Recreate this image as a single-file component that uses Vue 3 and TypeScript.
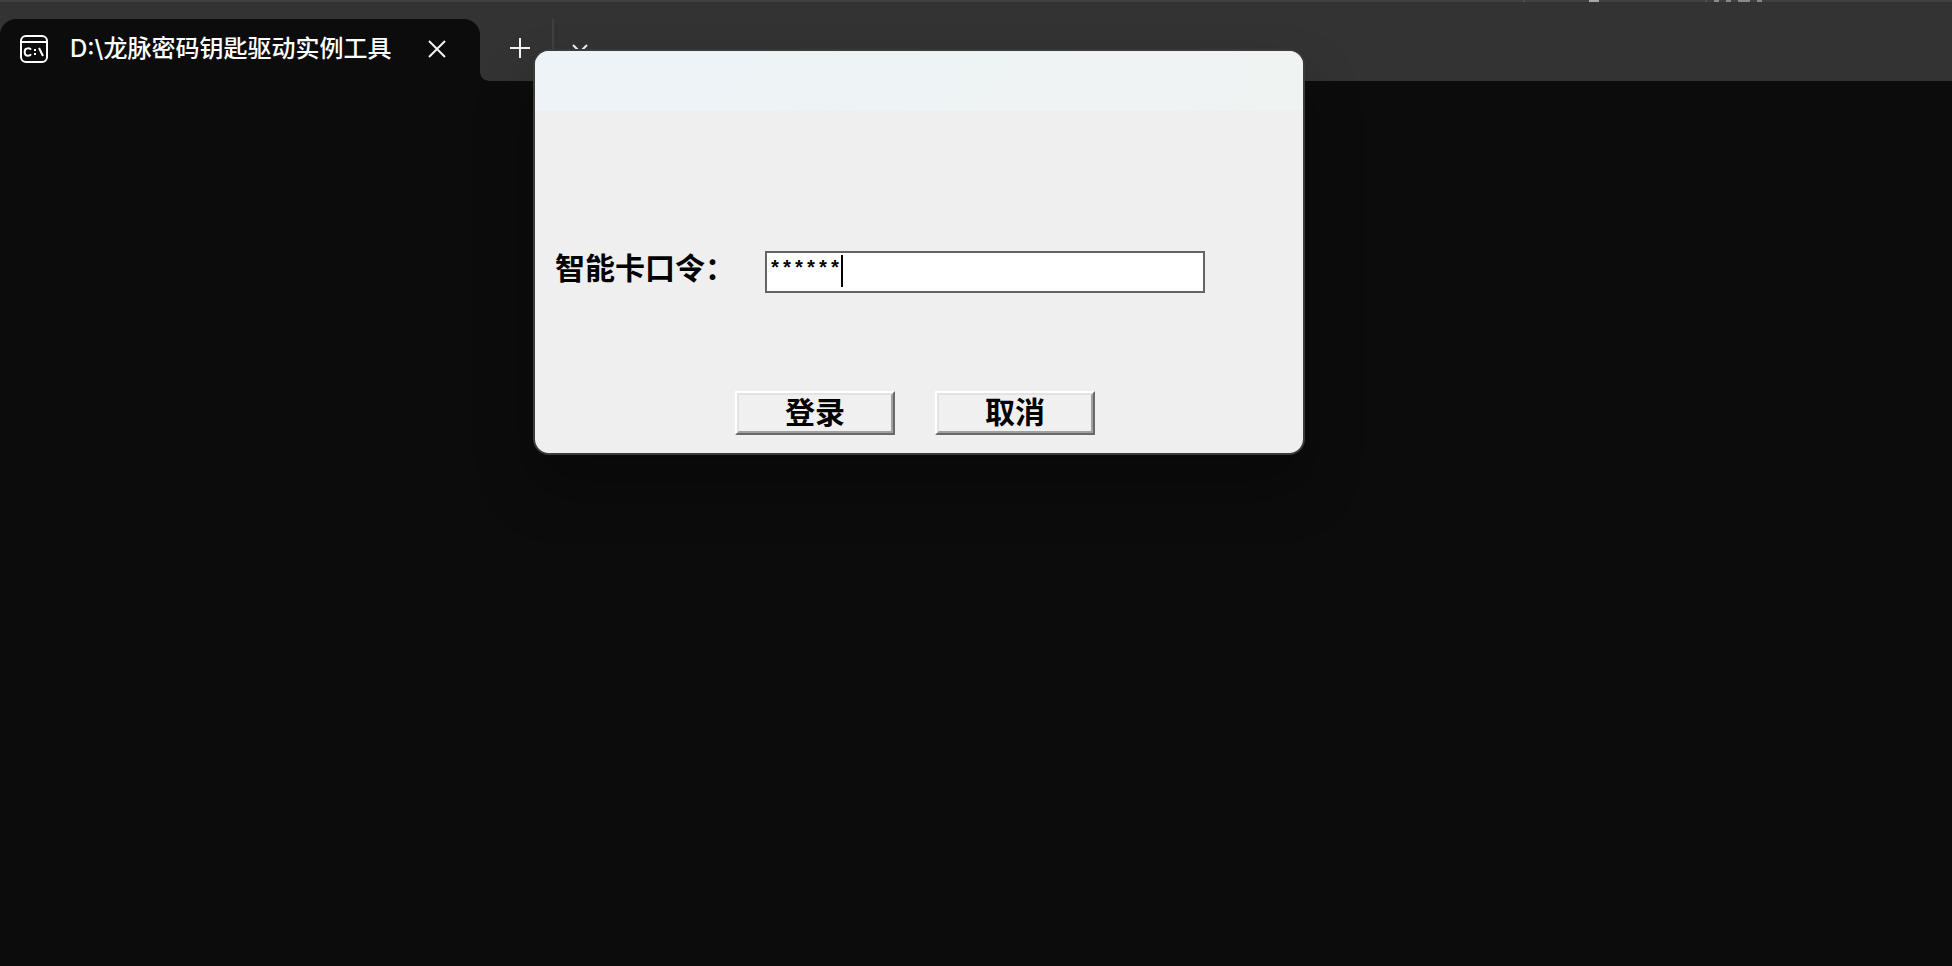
<script setup lang="ts">
import { ref } from 'vue'

const title = 'D:\\龙脉密码钥匙驱动实例工具'
const pin = ref('******')
const open = ref(true)
</script>

<template>
  <main class="terminal">
    <header class="strip">
      <div class="backdrop-edge" aria-hidden="true">
        <i class="tick first"></i><i class="chip"></i><i class="tick second"></i>
        <i class="mark"></i><i class="mark"></i><i class="mark wide"></i><i class="mark"></i>
      </div>
      <div class="tabs">
        <div class="tab">
          <svg class="logo" viewBox="0 0 28 28" aria-hidden="true">
            <rect x="1" y="1" width="26" height="26" rx="5" />
            <path d="M1 7H27" />
            <path d="M11 14.6C10.2 13.5 9 13.1 7.800 13.300C5.700 13.500 4.700 15 4.700 17C4.700 19.200 5.900 20.700 7.900 20.700C9.300 20.700 10.400 20.200 11 19.200" />
            <path d="M14 15h2M14 19h2M19 13L23 21" />
          </svg>
          <span class="title">{{ title }}</span>
          <button class="icon-button close" type="button" aria-label="关闭标签页">
            <svg viewBox="0 0 18 18"><path d="M1 1L17 17M17 1L1 17" /></svg>
          </button>
        </div>
        <div class="actions">
          <button class="icon-button add" type="button" aria-label="新建标签页">
            <svg viewBox="0 0 20 20"><path d="M10 0V20M0 10H20" /></svg>
          </button>
          <button class="icon-button more" type="button" aria-label="更多">
            <svg viewBox="0 0 16 10"><path d="M1 1L8 8L15 1" /></svg>
          </button>
        </div>
      </div>
    </header>

    <form v-if="open" class="dialog" role="dialog" aria-label="登录" @submit.prevent="open = false">
      <div class="caption"></div>
      <div class="body">
        <div class="field">
          <label for="pin">智能卡口令：</label>
          <div class="entry">
            <input id="pin" v-model="pin" type="text" autocomplete="off" />
            <span class="caret"></span>
          </div>
        </div>
        <div class="buttons">
          <button class="push" type="submit"><span>登录</span></button>
          <button class="push" type="button" @click="open = false"><span>取消</span></button>
        </div>
      </div>
    </form>
  </main>
</template>

<style>
body {
  background: #0c0c0c;
}
</style>

<style scoped>
* {
  box-sizing: border-box;
}

.terminal {
  position: relative;
  min-height: 100vh;
  background: #0c0c0c;
  overflow: hidden;
}

.strip {
  background: #333333;
}

.backdrop-edge {
  display: flex;
  height: 2px;
  padding-left: 78%;
  background: #404040;
}

.backdrop-edge i {
  height: 2px;
}

.tick {
  width: 2px;
  background: #505050;
}

.tick.second {
  margin-left: 106px;
}

.chip {
  width: 10px;
  margin-left: 64px;
  background: #a8a8a8;
}

.mark {
  width: 5px;
  margin-left: 7px;
  background: #8a8a8a;
}

.mark.wide {
  width: 12px;
}

.tabs {
  display: flex;
  height: 79px;
  padding-top: 17px;
}

.tab {
  display: flex;
  align-items: center;
  width: 480px;
  height: 62px;
  padding: 0 34px 2px 20px;
  border-radius: 16px 16px 0 0;
  background: #0c0c0c;
}

.logo {
  flex: none;
  width: 28px;
  height: 28px;
  fill: none;
  stroke: #ffffff;
  stroke-width: 2;
}

.title {
  flex: 1;
  margin-left: 22px;
  color: #ffffff;
  font-family: Inter, "Noto Sans CJK SC", sans-serif;
  font-size: 24px;
  font-weight: 500;
  line-height: 32px;
  white-space: nowrap;
}

.icon-button {
  display: flex;
  align-items: center;
  justify-content: center;
  padding: 0;
  border: 0;
  background: transparent;
}

.icon-button svg {
  fill: none;
  stroke: #f4f4f4;
  stroke-width: 2;
}

.close,
.close svg {
  width: 18px;
  height: 18px;
}

.actions {
  position: relative;
  display: flex;
  flex: 1;
  height: 62px;
  padding-left: 12px;
}

.actions::before {
  content: "";
  position: absolute;
  bottom: 0;
  left: 0;
  width: 8px;
  height: 8px;
  background: radial-gradient(circle at 100% 0, #333333 7px, #0c0c0c 8px);
}

.add {
  width: 56px;
  height: 58px;
}

.add svg {
  width: 20px;
  height: 20px;
}

.more {
  width: 54px;
  height: 60px;
  border-left: 2px solid #404040;
  margin-left: 4px;
}

.more svg {
  width: 16px;
  height: 10px;
}

.dialog {
  position: absolute;
  top: 49px;
  left: 533px;
  width: 772px;
  border: 2px solid #3b3b3b;
  border-radius: 16px;
  background: #efefef;
  box-shadow: 0 32px 56px rgba(0, 0, 0, 0.3);
  overflow: hidden;
}

.caption {
  height: 60px;
  background: linear-gradient(115deg, #edf3f8, #eff3f2);
}

.body {
  padding: 140px 98px 18px 20px;
}

.field {
  display: flex;
  justify-content: space-between;
  height: 42px;
}

label {
  font-family: "Noto Sans CJK SC", sans-serif;
  font-size: 30px;
  font-weight: 700;
  line-height: 30px;
  color: #000000;
  white-space: nowrap;
}

.entry {
  position: relative;
  width: 440px;
}

input {
  display: block;
  width: 100%;
  height: 42px;
  padding: 0 2px 6px;
  border: 2px solid #646464;
  border-radius: 0;
  outline: 0;
  background: #ffffff;
  color: #000000;
  font-family: "Liberation Mono", monospace;
  font-size: 20px;
  font-weight: 700;
  line-height: 24px;
}

.caret {
  position: absolute;
  top: 4px;
  left: 76px;
  width: 2px;
  height: 32px;
  background: #000000;
}

.buttons {
  display: flex;
  gap: 40px;
  margin-top: 98px;
  padding-left: 180px;
}

.push {
  width: 160px;
  height: 44px;
  padding: 0;
  border: 2px solid;
  border-color: #ffffff #696969 #696969 #ffffff;
  background: #f0f0f0;
  font-family: "Noto Sans CJK SC", sans-serif;
  font-size: 30px;
  font-weight: 700;
  line-height: 30px;
  color: #000000;
}

.push span {
  display: block;
  height: 40px;
  border: 2px solid;
  border-color: #e3e3e3 #a0a0a0 #a0a0a0 #e3e3e3;
}
</style>
